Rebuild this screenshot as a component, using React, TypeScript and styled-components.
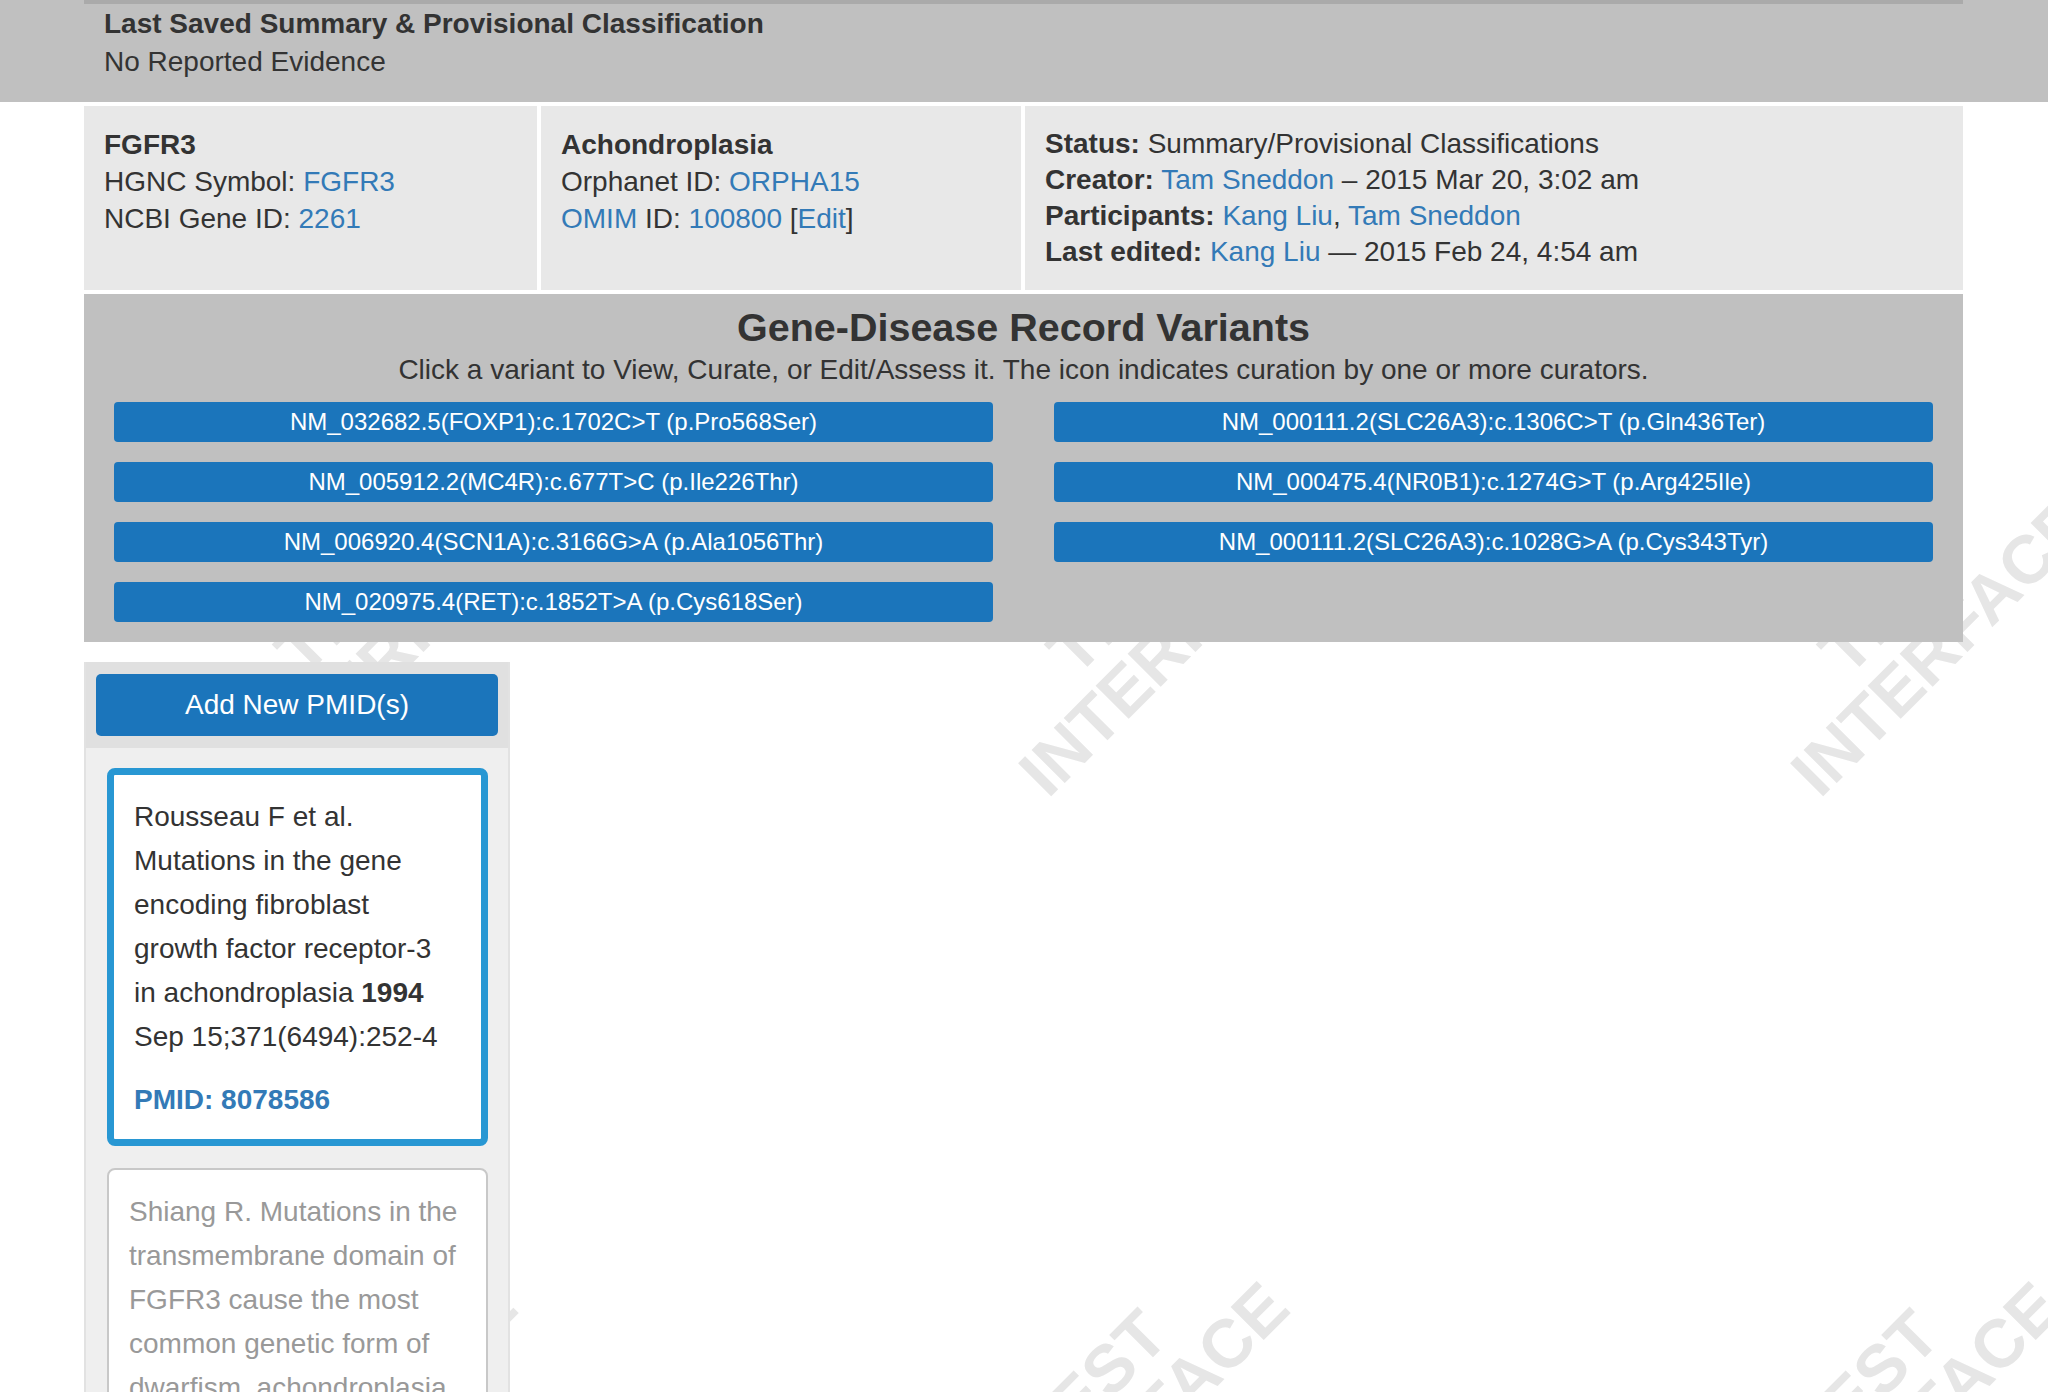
import React from 'react';
import styled, { createGlobalStyle } from 'styled-components';

// == constants ====================================================================================
const Colors = {
  text: '#333333',
  muted: '#999999',
  link: '#337ab7',
  band: '#c0c0c0',
  bandEdge: '#aaaaaa',
  panel: '#e8e8e8',
  button: '#1b75bb',
  columnHead: '#e0e0e0',
  column: '#efefef',
  columnEdge: '#e2e2e2',
  selected: '#2897d3',
  cardEdge: '#c8c8c8',
  watermark: '#e6e6e6',
};

const FONT = '"Liberation Sans", Arial, Helvetica, sans-serif';

const VARIANTS_LEFT = [
  'NM_032682.5(FOXP1):c.1702C>T (p.Pro568Ser)',
  'NM_005912.2(MC4R):c.677T>C (p.Ile226Thr)',
  'NM_006920.4(SCN1A):c.3166G>A (p.Ala1056Thr)',
  'NM_020975.4(RET):c.1852T>A (p.Cys618Ser)',
];

const VARIANTS_RIGHT = [
  'NM_000111.2(SLC26A3):c.1306C>T (p.Gln436Ter)',
  'NM_000475.4(NR0B1):c.1274G>T (p.Arg425Ile)',
  'NM_000111.2(SLC26A3):c.1028G>A (p.Cys343Tyr)',
];

// == styles =======================================================================================
const GlobalStyle = createGlobalStyle`
  * { box-sizing: border-box; }
  html, body { margin: 0; padding: 0; background: #fff; }
  body {
    font-family: ${ FONT };
    font-size: 28px;
    line-height: 37px;
    color: ${ Colors.text };
  }
`;

const Page = styled.div`
  position: relative;
  min-height: 1700px;
  overflow: hidden;
`;

const Watermark = styled.svg`
  position: absolute;
  top: 0;
  left: 0;
  width: 100%;
  height: 100%;
  pointer-events: none;
`;

const Content = styled.div`
  position: relative;
`;

const Band = styled.header`
  background: ${ Colors.band };
  padding: 0 85px 0 84px;
`;

const BandInner = styled.div`
  border-top: 4px solid ${ Colors.bandEdge };
  padding: 1px 20px 21px;
  line-height: 38px;
`;

const Container = styled.div`
  width: 1879px;
  margin-left: 84px;
`;

const Panels = styled.div`
  display: grid;
  grid-template-columns: 453px 480px 1fr;
  gap: 4px;
  margin-top: 4px;
`;

const Panel = styled.div<{ $dense?: boolean }>`
  background: ${ Colors.panel };
  padding: 20px;
  line-height: ${ ( p ) => p.$dense ? '36px' : '37px' };
`;

const Line = styled.div`
  white-space: nowrap;
`;

const Link = styled.a`
  color: ${ Colors.link };
  text-decoration: none;
`;

const VariantBox = styled.section`
  margin-top: 4px;
  background: ${ Colors.band };
  padding: 11px 30px 20px;
  text-align: center;
`;

const VariantTitle = styled.h2`
  margin: 0;
  font-size: 39.5px;
  line-height: 44px;
  font-weight: bold;
`;

const VariantNote = styled.p`
  margin: 2px 0 14px;
`;

const VariantGrid = styled.div`
  display: grid;
  grid-template-columns: 1fr 1fr;
  column-gap: 61px;
`;

const VariantColumn = styled.div`
  display: flex;
  flex-direction: column;
  gap: 20px;
`;

const VariantButton = styled.button`
  height: 40px;
  border: none;
  border-radius: 4px;
  background: ${ Colors.button };
  color: #fff;
  font-family: ${ FONT };
  font-size: 24px;
  padding: 0;
  cursor: pointer;
`;

const Column = styled.aside`
  width: 426px;
  margin-top: 20px;
  background: ${ Colors.column };
  border-left: 2px solid ${ Colors.columnEdge };
  border-right: 2px solid ${ Colors.columnEdge };
`;

const ColumnHead = styled.div`
  background: ${ Colors.columnHead };
  padding: 12px 10px;
`;

const AddButton = styled.button`
  display: block;
  width: 100%;
  height: 62px;
  border: none;
  border-radius: 5px;
  background: ${ Colors.button };
  color: #fff;
  font-family: ${ FONT };
  font-size: 28px;
  cursor: pointer;
`;

const ColumnBody = styled.div`
  display: flex;
  flex-direction: column;
  gap: 22px;
  padding: 20px 20px 20px 21px;
`;

const Card = styled.div<{ $selected?: boolean }>`
  background: #fff;
  border-radius: 8px;
  border: ${ ( p ) => p.$selected ? `7px solid ${ Colors.selected }` : `2px solid ${ Colors.cardEdge }` };
  padding: 20px 24px 21px 20px;
  color: ${ ( p ) => p.$selected ? Colors.text : Colors.muted };
`;

const CardText = styled.p`
  margin: 0 0 22px;
  line-height: 44px;
`;

const Pmid = styled.div<{ $selected?: boolean }>`
  font-weight: bold;
  color: ${ ( p ) => p.$selected ? Colors.link : Colors.muted };
`;

// == component ====================================================================================
const WatermarkMark = ( { x, y }: { x: number; y: number } ): JSX.Element => (
  <g
    transform={ `translate(${ x } ${ y }) rotate(-45)` }
    fill={ Colors.watermark }
    fontFamily={ FONT }
    fontWeight="bold"
    fontSize="68"
    textAnchor="middle"
  >
    <text x="0" y="-33">TEST</text>
    <text x="0" y="33">INTERFACE</text>
  </g>
);

const WatermarkLayer = (): JSX.Element => (
  <Watermark aria-hidden>
    <defs>
      <pattern id="wm" patternUnits="userSpaceOnUse" x="3" y="245" width="772" height="1580">
        <WatermarkMark x={ 386 } y={ 395 } />
        <WatermarkMark x={ 358 } y={ 1179 } />
      </pattern>
    </defs>
    <rect width="100%" height="100%" fill="url(#wm)" />
  </Watermark>
);

const App = (): JSX.Element => {
  return <Page>
    <GlobalStyle />
    <WatermarkLayer />
    <Content>
      <Band>
        <BandInner>
          <Line><strong>Last Saved Summary &amp; Provisional Classification</strong></Line>
          <Line>No Reported Evidence</Line>
        </BandInner>
      </Band>

      <Container>
        <Panels>
          <Panel>
            <Line><strong>FGFR3</strong></Line>
            <Line>HGNC Symbol: <Link href="#">FGFR3</Link></Line>
            <Line>NCBI Gene ID: <Link href="#">2261</Link></Line>
          </Panel>
          <Panel>
            <Line><strong>Achondroplasia</strong></Line>
            <Line>Orphanet ID: <Link href="#">ORPHA15</Link></Line>
            <Line><Link href="#">OMIM</Link> ID: <Link href="#">100800</Link> [<Link href="#">Edit</Link>]</Line>
          </Panel>
          <Panel $dense>
            <Line><strong>Status:</strong> Summary/Provisional Classifications</Line>
            <Line><strong>Creator:</strong> <Link href="#">Tam Sneddon</Link> – 2015 Mar 20, 3:02 am</Line>
            <Line><strong>Participants:</strong> <Link href="#">Kang Liu</Link>, <Link href="#">Tam Sneddon</Link></Line>
            <Line><strong>Last edited:</strong> <Link href="#">Kang Liu</Link> — 2015 Feb 24, 4:54 am</Line>
          </Panel>
        </Panels>

        <VariantBox>
          <VariantTitle>Gene-Disease Record Variants</VariantTitle>
          <VariantNote>
            Click a variant to View, Curate, or Edit/Assess it. The icon indicates curation by one or more curators.
          </VariantNote>
          <VariantGrid>
            <VariantColumn>
              { VARIANTS_LEFT.map( ( v ) => <VariantButton key={ v }>{ v }</VariantButton> ) }
            </VariantColumn>
            <VariantColumn>
              { VARIANTS_RIGHT.map( ( v ) => <VariantButton key={ v }>{ v }</VariantButton> ) }
            </VariantColumn>
          </VariantGrid>
        </VariantBox>

        <Column>
          <ColumnHead>
            <AddButton>Add New PMID(s)</AddButton>
          </ColumnHead>
          <ColumnBody>
            <Card $selected>
              <CardText>
                Rousseau F et al. Mutations in the gene encoding fibroblast growth factor receptor-3
                in achondroplasia <strong>1994</strong> Sep 15;371(6494):252-4
              </CardText>
              <Pmid $selected>PMID: 8078586</Pmid>
            </Card>
            <Card>
              <CardText>
                Shiang R. Mutations in the transmembrane domain of FGFR3 cause the most common genetic
                form of dwarfism, achondroplasia. Cell <strong>1994</strong> Jul 29;78(2):335-42
              </CardText>
              <Pmid>PMID: 7913883</Pmid>
            </Card>
          </ColumnBody>
        </Column>
      </Container>
    </Content>
  </Page>;
};

export default App;
